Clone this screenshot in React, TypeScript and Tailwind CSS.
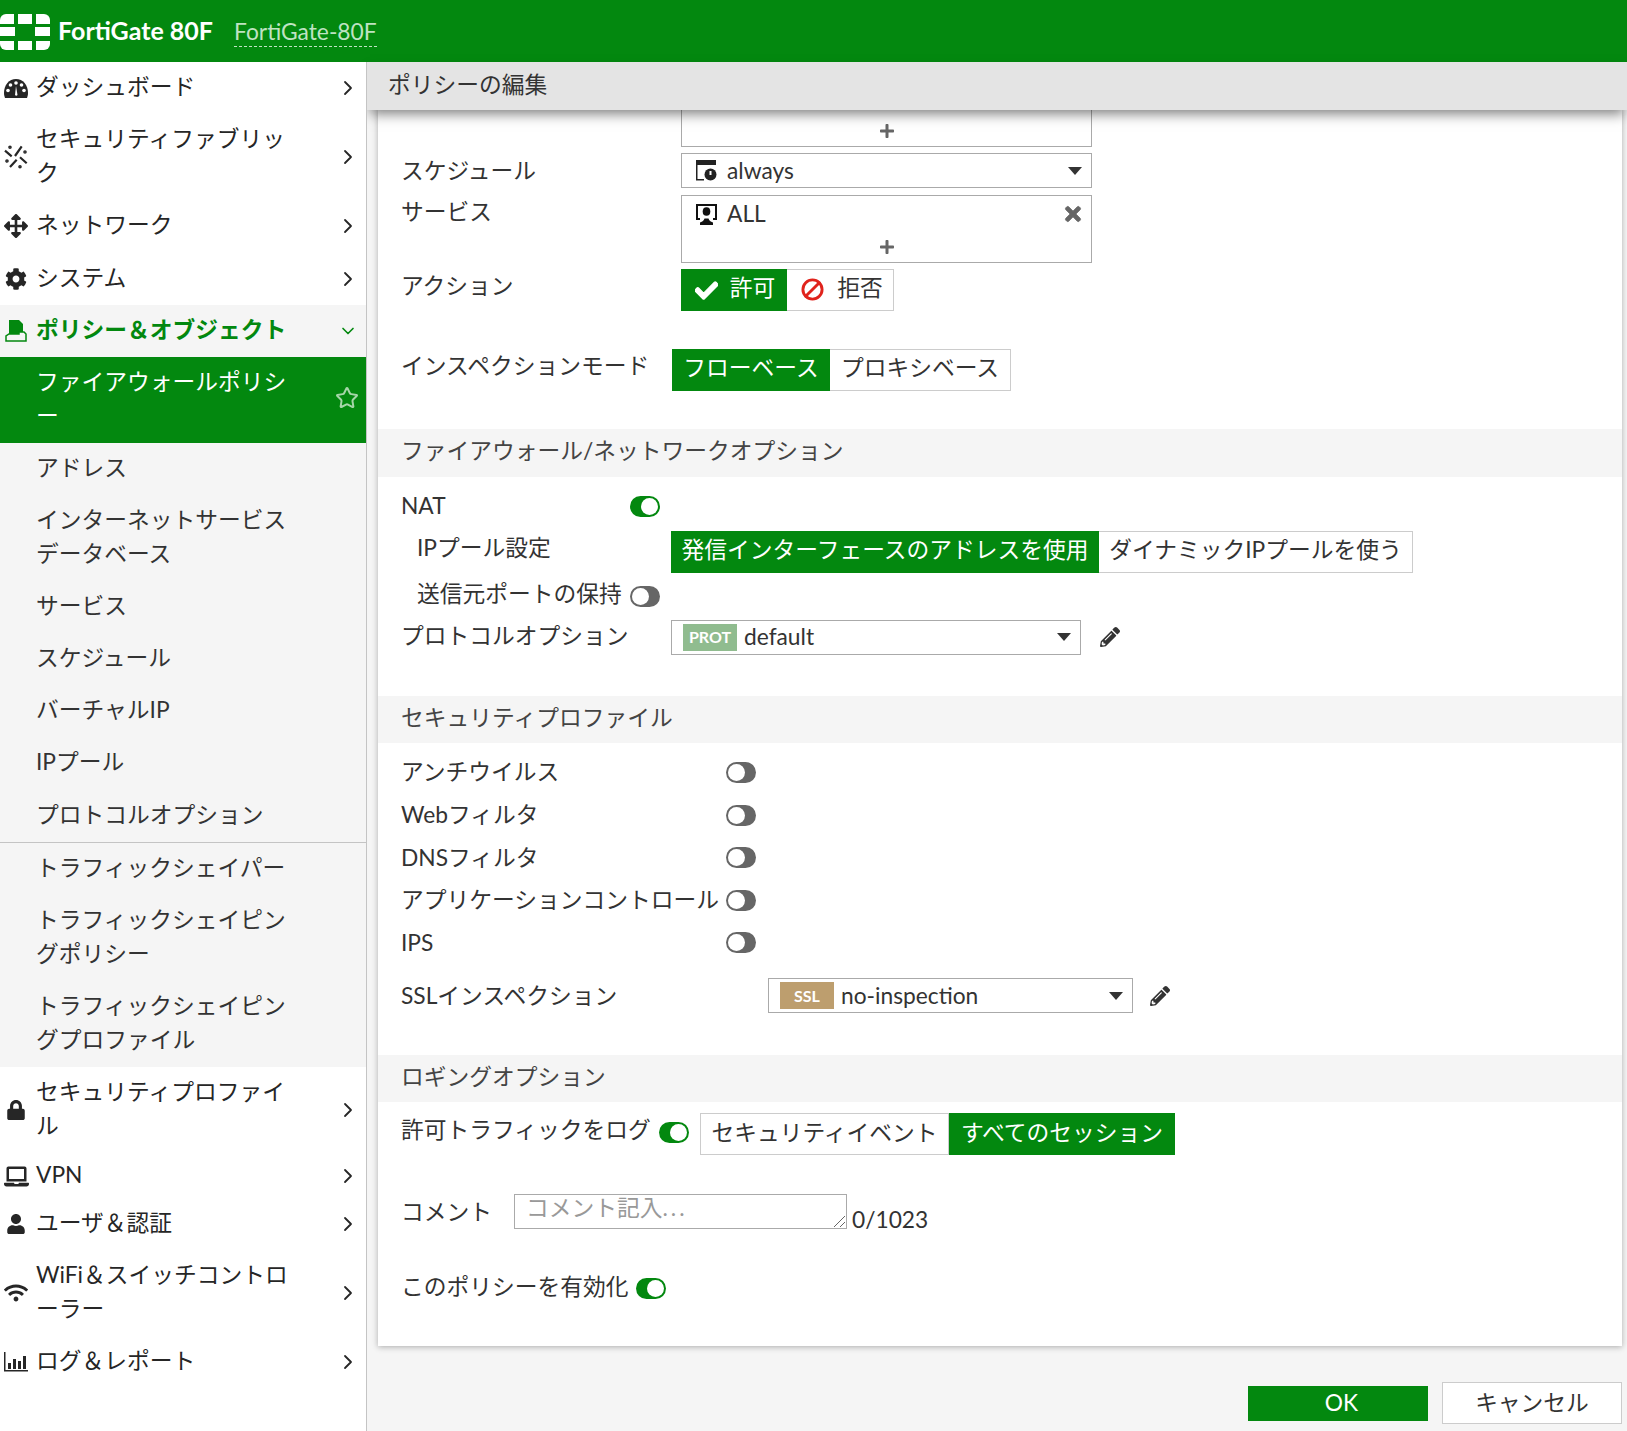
import React from "react";
import { ChevronRight, ChevronDown, Star, Ban } from "lucide-react";
import { FaCog, FaArrowsAlt, FaPencilAlt, FaLock, FaUser, FaWifi, FaCheck, FaTimes, FaPlus, FaLaptop } from "react-icons/fa";

const GREEN = "bg-[#03880f]";

const Logo = () => (
  <svg width="50" height="36" viewBox="0 0 50 36" fill="#fff" className="mt-[2px]">
    <path d="M0 10V6a6 6 0 0 1 6-6h8v10z" />
    <rect x="18" y="0" width="14" height="10" />
    <path d="M36 0h8a6 6 0 0 1 6 6v4H36z" />
    <rect x="0" y="13" width="15" height="9" />
    <rect x="35" y="13" width="15" height="9" />
    <path d="M0 27h14v9H6a6 6 0 0 1-6-6z" />
    <rect x="18" y="27" width="14" height="9" />
    <path d="M36 27h14v3a6 6 0 0 1-6 6h-8z" />
  </svg>
);

const DashIcon = () => (
  <svg width="24" height="19" viewBox="0 0 24 19">
    <path d="M0 14C0 6 5 0 12 0s12 6 12 14c0 2-.5 3.500-1 5H1c-.5-1.500-1-3-1-5z" fill="#262626" />
    <circle cx="12" cy="4" r="1.800" fill="#fff" />
    <circle cx="6.500" cy="6" r="1.800" fill="#fff" />
    <circle cx="17.500" cy="6" r="1.800" fill="#fff" />
    <circle cx="4" cy="11.500" r="1.800" fill="#fff" />
    <circle cx="20" cy="11.500" r="1.800" fill="#fff" />
    <path d="M11 16l1-9 1.500 9a1.500 1.500 0 0 1-2.500 0z" fill="#fff" />
  </svg>
);

const PolicyIcon = () => (
  <svg width="22" height="22" viewBox="0 0 22 22" fill="#03880f">
    <path d="M4 0h10l4 4v8h-4v2H4z" />
    <path d="M1 21v-5l3-2h10v-2h5l2 2v7z" fill="none" stroke="#03880f" strokeWidth="1.500" />
  </svg>
);

const FabricIcon = () => (
  <svg width="24" height="24" viewBox="0 0 24 24" stroke="#262626" fill="#262626" strokeWidth="2.200">
    <path d="M11 11 17.700 1.300M6 22l6.700-7.300M1 5.700l6.700 5.600M16 12.300l6.700 6" fill="none" />
    <circle cx="3" cy="16" r="0.700" />
    <circle cx="21" cy="7" r="0.700" />
    <circle cx="6" cy="2.300" r="0.700" />
    <circle cx="16" cy="21.700" r="0.700" />
  </svg>
);

const ReportIcon = () => (
  <svg width="24" height="20" viewBox="0 0 24 20" fill="#262626">
    <path d="M0 0h1.500v18H24v1.500H0z" />
    <rect x="4" y="11" width="3" height="6" />
    <rect x="9" y="7" width="3" height="10" />
    <rect x="14" y="9" width="3" height="8" />
    <rect x="19" y="4" width="3" height="13" />
  </svg>
);

type NavItem = {
  label: string;
  h: string;
  icon?: React.ReactNode;
};

const topItems: NavItem[] = [
  { label: "ダッシュボード", h: "h-[52px]", icon: <DashIcon /> },
  { label: "セキュリティファブリック", h: "h-[86px]", icon: <FabricIcon /> },
  { label: "ネットワーク", h: "h-[52px]", icon: <FaArrowsAlt size={24} /> },
  { label: "システム", h: "h-[53px]", icon: <FaCog size={22} /> },
];

const subItems: NavItem[] = [
  { label: "アドレス", h: "h-[52px]" },
  { label: "インターネットサービスデータベース", h: "h-[86px]" },
  { label: "サービス", h: "h-[52px]" },
  { label: "スケジュール", h: "h-[52px]" },
  { label: "バーチャルIP", h: "h-[52px]" },
  { label: "IPプール", h: "h-[52px]" },
  { label: "プロトコルオプション", h: "h-[53px]" },
];

const subItems2: NavItem[] = [
  { label: "トラフィックシェイパー", h: "h-[52px]" },
  { label: "トラフィックシェイピングポリシー", h: "h-[86px]" },
  { label: "トラフィックシェイピングプロファイル", h: "h-[86px]" },
];

const bottomItems: NavItem[] = [
  { label: "セキュリティプロファイル", h: "h-[86px]", icon: <FaLock size={20} /> },
  { label: "VPN", h: "h-[46px]", icon: <FaLaptop size={25} /> },
  { label: "ユーザ＆認証", h: "h-[50px]", icon: <FaUser size={20} /> },
  { label: "WiFi＆スイッチコントローラー", h: "h-[88px]", icon: <FaWifi size={24} /> },
  { label: "ログ＆レポート", h: "h-[50px]", icon: <ReportIcon /> },
];

const Row = ({ item }: { item: NavItem }) => (
  <div className={`${item.h} flex items-center text-[#262626]`}>
    <div className="w-[32px] flex justify-center shrink-0">{item.icon}</div>
    <div className="w-[256px] ml-[4px] pb-[2px] leading-[34px] break-all">{item.label}</div>
    <ChevronRight size={24} strokeWidth={1.8} className="ml-auto mr-[6px]" />
  </div>
);

const SubRow = ({ item }: { item: NavItem }) => (
  <div className={`${item.h} flex items-center pl-[36px] text-[#333]`}>
    <div className="w-[256px] pb-[2px] leading-[34px] break-all">{item.label}</div>
  </div>
);

const Sidebar = () => (
  <aside className="w-[367px] shrink-0 border-r border-[#c4c4c4] bg-white relative z-20">
    {topItems.map((i) => (
      <Row key={i.label} item={i} />
    ))}
    <div className="h-[52px] flex items-center bg-[#f5f5f5] text-[#03880f] font-bold">
      <div className="w-[32px] flex justify-center shrink-0">
        <PolicyIcon />
      </div>
      <div className="ml-[4px] pb-[2px] flex-1">ポリシー＆オブジェクト</div>
      <ChevronDown size={20} className="mr-[8px]" />
    </div>
    <div className={`h-[86px] ${GREEN} flex items-center text-white pl-[36px] relative`}>
      <div className="w-[256px] pb-[2px] leading-[34px] break-all">ファイアウォールポリシー</div>
      <Star size={24} strokeWidth={2} className="absolute right-[7px] top-[29px] text-[#a6d6a9]" />
    </div>
    <div className="bg-[#f5f5f5]">
      <div className="border-b border-[#c4c4c4]">
        {subItems.map((i) => (
          <SubRow key={i.label} item={i} />
        ))}
      </div>
      {subItems2.map((i) => (
        <SubRow key={i.label} item={i} />
      ))}
    </div>
    {bottomItems.map((i) => (
      <Row key={i.label} item={i} />
    ))}
  </aside>
);

const Toggle = ({ on, className = "" }: { on?: boolean; className?: string }) => (
  <div
    className={`w-[30px] h-[21px] rounded-full relative shrink-0 ${on ? "bg-[#03880f]" : "bg-[#666]"} ${className}`}
  >
    <div
      className={`absolute top-[2px] w-[17px] h-[17px] rounded-full bg-white ${on ? "right-[2px]" : "left-[2px]"}`}
    />
  </div>
);

const Seg = ({
  on,
  className,
  children,
}: {
  on?: boolean;
  className: string;
  children: React.ReactNode;
}) => (
  <div
    className={`h-[42px] pb-[3px] flex items-center justify-center ${
      on ? `${GREEN} text-white` : "border border-[#ccc] text-[#333] bg-white"
    } ${className}`}
  >
    {children}
  </div>
);

const SectionHead = ({ title, className }: { title: string; className: string }) => (
  <div className={`pb-[4px] bg-[#f5f5f5] pl-[23px] flex items-center text-[#444] ${className}`}>{title}</div>
);

const Caret = () => (
  <div className="w-0 h-0 border-l-[7px] border-r-[7px] border-t-[8px] border-l-transparent border-r-transparent border-t-[#333]" />
);

const ProfileToggle = ({ label }: { label: string }) => (
  <div className="h-[42.6px] flex items-center pl-[23px] text-[#333]">
    <div className="w-[325px] shrink-0 whitespace-nowrap">{label}</div>
    <Toggle />
  </div>
);

const ScheduleIcon = () => (
  <svg width="21" height="21" viewBox="0 0 21 21">
    <path d="M0 0h20v5H1.500v14H8v1.500H0z" fill="#222" />
    <circle cx="14.500" cy="14.500" r="7.500" fill="#fff" />
    <circle cx="14.500" cy="14.500" r="6" fill="#222" />
    <path d="M14.500 11v4" stroke="#fff" strokeWidth="2" />
  </svg>
);

const ServiceIcon = () => (
  <svg width="21" height="21" viewBox="0 0 21 21" fill="#111">
    <path d="M0 0h21v16h-4v-2h2V2H2v12h2v2H0z" />
    <ellipse cx="10.500" cy="7.500" rx="3.800" ry="4.300" />
    <path d="M4 21v-2.500c2.500-1 4-2 4.500-4h4c.5 2 2 3 4.500 4V21z" />
  </svg>
);

export default function App() {
  return (
    <div
      className="w-[1627px] h-[1431px] overflow-hidden flex flex-col text-[22.75px] bg-white"
      style={{ fontFamily: '"Lato", "Noto Sans CJK JP", sans-serif' }}
    >
      <header className={`h-[62px] shrink-0 ${GREEN} flex items-center text-white`}>
        <Logo />
        <span className="ml-[8px] text-[25px] font-bold">FortiGate 80F</span>
        <span className="ml-[21px] text-[22.8px] text-[#bfe3c2] border-b border-dashed border-[#bfe3c2] leading-[30px]">
          FortiGate-80F
        </span>
      </header>
      <div className="flex flex-1 min-h-0">
        <Sidebar />
        <main className="flex-1 min-w-0 bg-[#f5f5f5] flex flex-col">
          <div className="h-[48px] shrink-0 bg-[#e4e4e4] pl-[21px] pb-[2px] flex items-center text-[#333] shadow-[0_7px_12px_-3px_rgba(0,0,0,0.5)] relative z-10">
            ポリシーの編集
          </div>
          <section className="ml-[11px] mr-[5px] h-[1236px] shrink-0 bg-white shadow-[0_1px_6px_rgba(0,0,0,0.3)] flex flex-col text-[#333]">
            <div className="ml-[303px] w-[411px] h-[37px] pt-[5px] border border-t-0 border-[#aaa] flex items-center justify-center text-[#666]">
              <FaPlus size={16} />
            </div>

            <div className="mt-[6px] flex">
              <div className="w-[303px] pl-[23px] h-[37px] flex items-center">スケジュール</div>
              <div className="w-[411px] h-[35px] border border-[#aaa] flex items-center pl-[14px] pr-[9px]">
                <ScheduleIcon />
                <span className="ml-[10px] pt-[2px] flex-1">always</span>
                <Caret />
              </div>
            </div>

            <div className="mt-[5px] flex">
              <div className="w-[303px] pl-[23px] h-[35px] flex items-center">サービス</div>
              <div className="w-[411px] h-[68px] border border-[#aaa] relative">
                <div className="h-[36px] flex items-center pl-[14px] pr-[7px]">
                  <ServiceIcon />
                  <span className="ml-[10px] flex-1">ALL</span>
                  <FaTimes size={22} stroke="currentColor" strokeWidth={20} className="text-[#666]" />
                </div>
                <div className="h-[30px] flex items-center justify-center text-[#666]">
                  <FaPlus size={16} />
                </div>
              </div>
            </div>

            <div className="mt-[6px] flex">
              <div className="w-[303px] pl-[23px] h-[34px] flex items-center">アクション</div>
              <Seg on className="w-[106px] pl-[2px]">
                <FaCheck size={23} stroke="currentColor" strokeWidth={25} className="mt-[3px]" />
                <span className="ml-[12px]">許可</span>
              </Seg>
              <Seg className="w-[107px] border-l-0 pl-[4px]">
                <Ban size={23} strokeWidth={3} className="text-[#e0231c] mt-[2px] -scale-x-100" />
                <span className="ml-[13px]">拒否</span>
              </Seg>
            </div>

            <div className="mt-[38px] flex">
              <div className="w-[294px] pl-[23px] h-[35px] flex items-center whitespace-nowrap">インスペクションモード</div>
              <Seg on className="w-[158px]">
                フローベース
              </Seg>
              <Seg className="w-[181px] border-l-0">プロキシベース</Seg>
            </div>

            <SectionHead title="ファイアウォール/ネットワークオプション" className="mt-[38px] h-[48px]" />

            <div className="mt-[8px] h-[42px] flex items-center pl-[23px]">
              <div className="w-[229px]">NAT</div>
              <Toggle on />
            </div>
            <div className="mt-[4px] flex">
              <div className="w-[293px] pl-[39px] h-[35px] flex items-center">IPプール設定</div>
              <Seg on className="w-[428px]">
                発信インターフェースのアドレスを使用
              </Seg>
              <Seg className="w-[314px] border-l-0">ダイナミックIPプールを使う</Seg>
            </div>
            <div className="mt-[2px] h-[42px] flex items-center pl-[39px]">
              <div className="w-[213px] pb-[3px] whitespace-nowrap">送信元ポートの保持</div>
              <Toggle />
            </div>
            <div className="mt-[2px] flex items-center">
              <div className="w-[293px] pl-[23px] pb-[2px] whitespace-nowrap">プロトコルオプション</div>
              <div className="w-[410px] h-[35px] border border-[#aaa] flex items-center pl-[11px] pr-[9px]">
                <div className="w-[54px] h-[27px] bg-[#90bc8f] text-white text-[16px] font-bold flex items-center justify-center">
                  PROT
                </div>
                <span className="ml-[7px] flex-1">default</span>
                <Caret />
              </div>
              <FaPencilAlt size={20} className="ml-[19px] text-[#333]" />
            </div>

            <SectionHead title="セキュリティプロファイル" className="mt-[41px] h-[47px]" />
            <div className="mt-[8px]">
              {["アンチウイルス", "Webフィルタ", "DNSフィルタ", "アプリケーションコントロール", "IPS"].map((l) => (
                <ProfileToggle key={l} label={l} />
              ))}
            </div>
            <div className="mt-[14px] flex items-center">
              <div className="w-[390px] pl-[23px] whitespace-nowrap">SSLインスペクション</div>
              <div className="w-[365px] h-[35px] border border-[#aaa] flex items-center pl-[11px] pr-[9px]">
                <div className="w-[54px] h-[27px] bg-[#bd9e6e] text-white text-[16px] font-bold flex items-center justify-center">
                  SSL
                </div>
                <span className="ml-[7px] flex-1">no-inspection</span>
                <Caret />
              </div>
              <FaPencilAlt size={20} className="ml-[17px] text-[#333]" />
            </div>

            <SectionHead title="ロギングオプション" className="mt-[42px] h-[47px]" />

            <div className="mt-[11px] flex items-center">
              <div className="w-[281px] pl-[23px] pb-[8px] whitespace-nowrap">許可トラフィックをログ</div>
              <Toggle on className="-mt-[3px]" />
              <Seg className="w-[249px] ml-[11px]">セキュリティイベント</Seg>
              <Seg on className="w-[226px]">
                すべてのセッション
              </Seg>
            </div>

            <div className="mt-[39px] flex items-start">
              <div className="w-[136px] h-[35px] pl-[23px] flex items-center whitespace-nowrap">コメント</div>
              <div className="w-[333px] h-[35px] border border-[#aaa] pl-[11px] text-[#999] leading-[26px] relative">
                コメント記入<span className="tracking-[3px]">...</span>
                <svg width="14" height="14" viewBox="0 0 14 14" className="absolute right-0 bottom-0" stroke="#666">
                  <path d="M13 2 2 13M13 8 8 13" />
                </svg>
              </div>
              <span className="ml-[5px] mt-[9px]">0/1023</span>
            </div>

            <div className="mt-[33px] flex items-center">
              <div className="w-[258px] pl-[23px] pb-[2px] whitespace-nowrap">このポリシーを有効化</div>
              <Toggle on />
            </div>
          </section>

          <div className="mt-[36px] flex items-center justify-end pr-[5px]">
            <div className={`w-[180px] h-[35px] ${GREEN} text-white pl-[7px] flex items-center justify-center`}>OK</div>
            <div className="ml-[14px] w-[180px] h-[42px] border border-[#ccc] bg-white text-[#333] flex items-center justify-center">
              キャンセル
            </div>
          </div>
        </main>
      </div>
    </div>
  );
}
